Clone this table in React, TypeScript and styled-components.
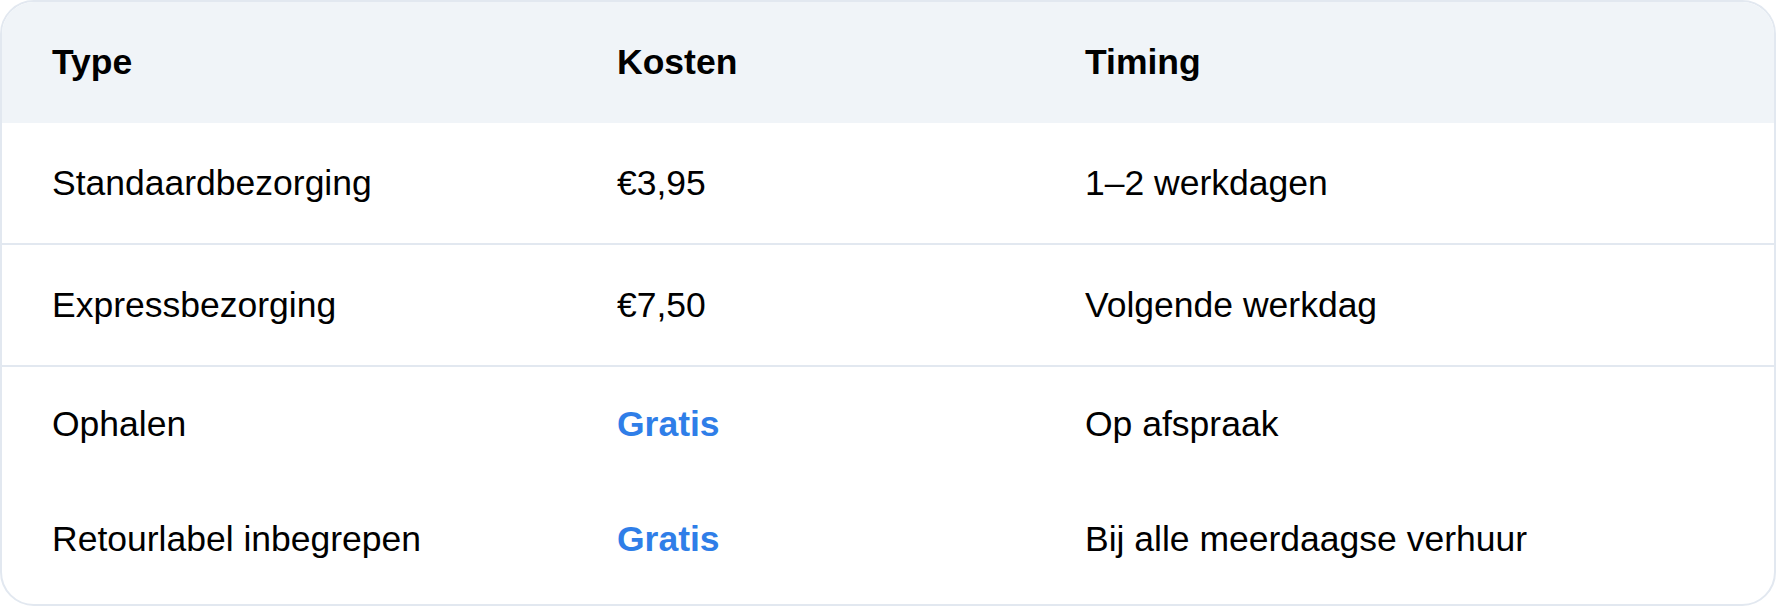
import React from 'react';
import styled, {createGlobalStyle} from "styled-components";

const GlobalStyle = createGlobalStyle`
  html, body {
    margin: 0;
    padding: 0;
    background: #ffffff;
  }
  body {
    font-family: "Liberation Sans", Arial, sans-serif;
  }
`

type Row = {
    type: string;
    cost: string;
    free?: boolean;
    timing: string;
    divider?: boolean;
    height?: number;
}

const rows: Row[] = [
    {type: 'Standaardbezorging', cost: '€3,95', timing: '1–2 werkdagen', divider: true, height: 122},
    {type: 'Expressbezorging', cost: '€7,50', timing: 'Volgende werkdag', divider: true, height: 122},
    {type: 'Ophalen', cost: 'Gratis', free: true, timing: 'Op afspraak', height: 114},
    {type: 'Retourlabel inbegrepen', cost: 'Gratis', free: true, timing: 'Bij alle meerdaagse verhuur'},
];

export default function App() {
    return (
        <>
            <GlobalStyle/>
            <Card>
                <HeadRow>
                    <HeadCell>Type</HeadCell>
                    <HeadCell>Kosten</HeadCell>
                    <HeadCell>Timing</HeadCell>
                </HeadRow>
                {rows.map((r) => (
                    <BodyRow key={r.type} $divider={r.divider} $height={r.height}>
                        <Cell>{r.type}</Cell>
                        <Cell $free={r.free}>{r.cost}</Cell>
                        <Cell>{r.timing}</Cell>
                    </BodyRow>
                ))}
            </Card>
        </>
    );
}

const Card = styled.div`
  box-sizing: border-box;
  width: 1776px;
  height: 606px;
  border: 2px solid #e2e8f0;
  border-radius: 34px;
  overflow: hidden;
  display: flex;
  flex-direction: column;
  background: #ffffff;
`
const HeadRow = styled.div`
  display: grid;
  grid-template-columns: 565px 468px 1fr;
  height: 121px;
  flex: none;
  align-items: center;
  background: #f0f4f8;
`
const HeadCell = styled.div`
  padding-left: 50px;
  font-size: 35.5px;
  font-weight: 700;
  color: #000000;
`
const BodyRow = styled.div<{ $divider?: boolean; $height?: number }>`
  box-sizing: border-box;
  display: grid;
  grid-template-columns: 565px 468px 1fr;
  align-items: center;
  ${p => p.$height ? `height: ${p.$height}px; flex: none;` : 'flex: 1; padding-bottom: 6px;'}
  border-bottom: ${p => p.$divider ? '2px solid #e2e8f0' : 'none'};
`
const Cell = styled.div<{ $free?: boolean }>`
  padding-left: 50px;
  font-size: 35.5px;
  font-weight: ${p => p.$free ? 700 : 400};
  color: ${p => p.$free ? '#2f7ee8' : '#000000'};
`
